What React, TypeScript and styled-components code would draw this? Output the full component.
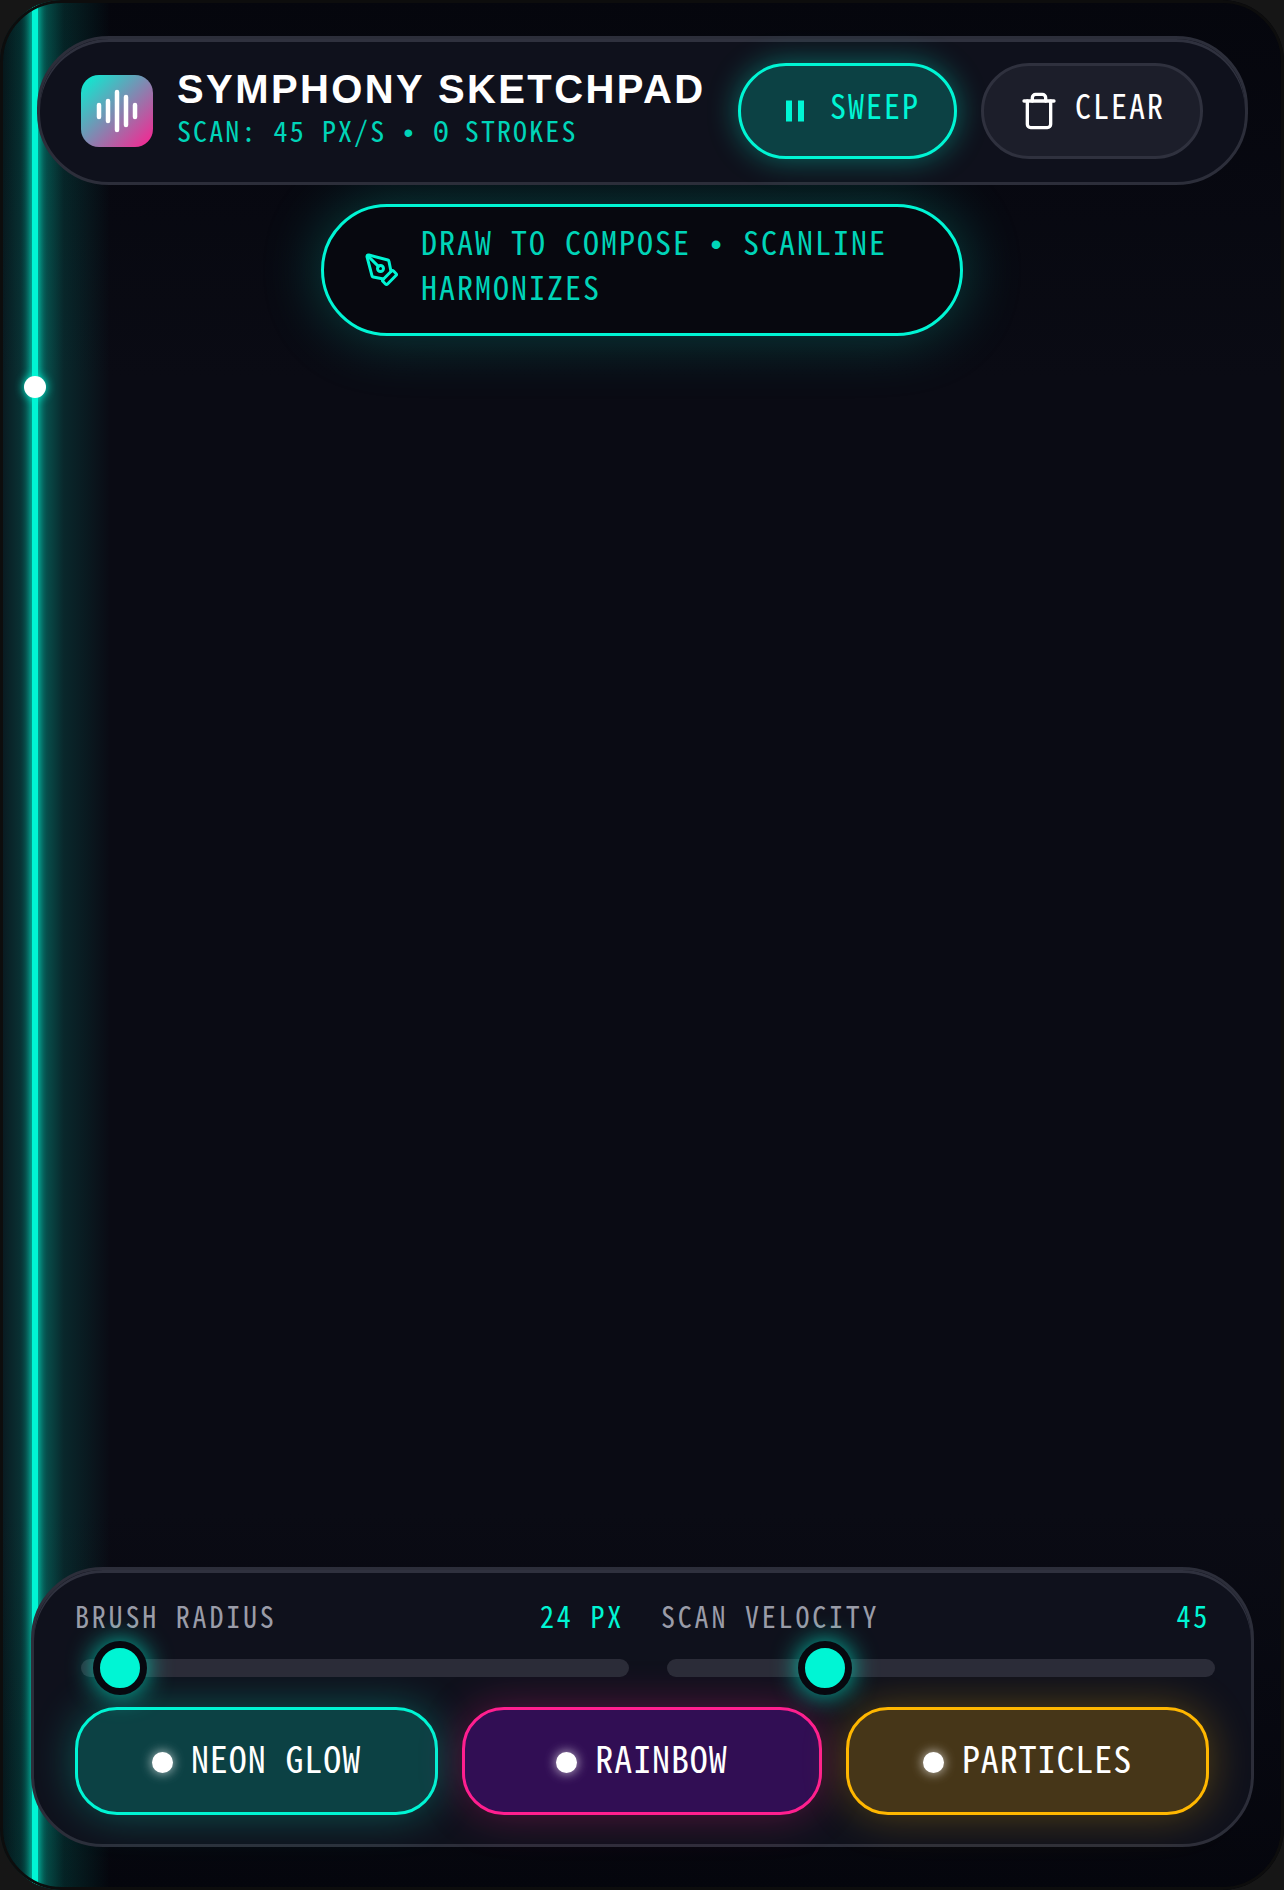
import React from 'react';
import styled, {createGlobalStyle} from 'styled-components';
import {PenTool, Trash} from 'lucide-react';

const TEAL = '#00f5d4';
const MONO = `'Noto Sans Mono CJK SC', 'Noto Sans CJK SC', 'DejaVu Sans Mono', monospace`;

const GlobalStyle = createGlobalStyle`
  html, body {
    margin: 0;
    padding: 0;
    background: #161616;
  }
  * {
    box-sizing: border-box;
  }
`;

const Frame = styled.div`
  position: relative;
  width: 1284px;
  height: 1890px;
  display: flex;
  flex-direction: column;
  overflow: hidden;
  border-radius: 62px;
  background: linear-gradient(180deg, #05060d 0%, #0a0b14 20%, #0a0b14 80%, #05060d 100%);
  /* thin dark rim that sits over the scan glow */
  &::after {
    content: '';
    position: absolute;
    inset: 0;
    border-radius: 62px;
    border: 3px solid #0d0d0d;
    pointer-events: none;
  }
`;

const ScanGlow = styled.div`
  position: absolute;
  top: 0;
  bottom: 0;
  left: 0;
  width: 110px;
  background: linear-gradient(
    90deg,
    rgba(0, 245, 212, 0.05) 0%,
    rgba(0, 245, 212, 0.16) 18%,
    rgba(0, 245, 212, 0.36) 29%,
    rgba(0, 245, 212, 0.36) 35%,
    rgba(0, 245, 212, 0.12) 58%,
    rgba(0, 245, 212, 0) 100%
  );
`;

const ScanLine = styled.div`
  position: absolute;
  top: 0;
  bottom: 0;
  left: 32px;
  width: 6px;
  background: ${TEAL};
  box-shadow: 0 0 8px ${TEAL};
`;

const ScanDot = styled.div`
  position: absolute;
  top: 376px;
  left: 24px;
  width: 22px;
  height: 22px;
  border-radius: 50%;
  background: #fff;
  box-shadow: 0 0 10px ${TEAL};
`;

const Header = styled.header`
  position: relative;
  display: flex;
  align-items: center;
  margin: 36px 36px 0 37px;
  height: 149px;
  padding: 0 42px 0 41px;
  border-radius: 72px;
  border: 3px solid #2c2e3a;
  box-shadow: inset 0 3px 0 #2f313e;
  background: #0f111c;
`;

const Logo = styled.div`
  flex: none;
  width: 72px;
  height: 72px;
  border-radius: 18px;
  display: flex;
  align-items: center;
  justify-content: center;
  background: linear-gradient(135deg, #00f5d4 0%, #ff1f8f 100%);
`;

const TitleBlock = styled.div`
  margin-left: 24px;
  padding-bottom: 8px;
  display: flex;
  flex-direction: column;
`;

const Title = styled.h1`
  margin: 0;
  font: 700 40px/44px 'Liberation Sans', Arial, sans-serif;
  letter-spacing: 2.4px;
  color: #fff;
  white-space: nowrap;
`;

// installed mono is a little shorter than the one on the buttons and labels
const Tall = styled.span`
  display: inline-block;
  transform: scaleY(1.07);
`;

const ButtonLabel = styled(Tall)`
  padding-bottom: 13px;
`;

const Bullet = styled.span`
  display: inline-block;
  width: 0.5em;
  line-height: 1;
  text-align: center;
  font-family: 'Liberation Sans', sans-serif;
`;

// the reference has a slashed zero, this mono does not
const Zero = styled.span`
  display: inline-block;
  line-height: 1;
  font-family: 'DejaVu Sans Mono', monospace;
  letter-spacing: -0.7px;
`;

const Subtitle = styled.div`
  margin-top: 2px;
  font: 400 28px/34px ${MONO};
  letter-spacing: 2.1px;
  color: #00d4b8;
  white-space: nowrap;
`;

const Actions = styled.div`
  margin-left: auto;
  display: flex;
  gap: 24px;
`;

const PillButton = styled.button<{$active?: boolean}>`
  height: 96px;
  display: flex;
  align-items: center;
  justify-content: center;
  border-radius: 48px;
  border: 3px solid ${p => (p.$active ? TEAL : '#2f313e')};
  background: ${p => (p.$active ? '#0c4144' : '#1c1e2a')};
  color: ${p => (p.$active ? TEAL : '#fff')};
  box-shadow: ${p => (p.$active ? '0 0 30px rgba(0, 245, 212, 0.4)' : 'none')};
  font: 400 32px/40px ${MONO};
  letter-spacing: 2px;
`;

const SweepButton = styled(PillButton)`
  width: 219px;
  gap: 23px;
  padding: 0 0 0 8px;
`;

const ClearButton = styled(PillButton)`
  width: 222px;
  gap: 16px;
  padding: 0;
`;

const Hint = styled.div`
  align-self: center;
  margin-top: 19px;
  width: 642px;
  height: 132px;
  display: flex;
  align-items: center;
  gap: 21px;
  padding: 0 40px;
  border-radius: 66px;
  border: 3px solid ${TEAL};
  background: #07080f;
  box-shadow: 0 0 60px rgba(0, 245, 212, 0.25);
  color: #00d4b8;
  font: 400 32px/45px ${MONO};
  letter-spacing: 2px;
`;

const HintIcon = styled(PenTool)`
  flex: none;
  color: ${TEAL};
`;

const HintText = styled.div`
  padding-bottom: 12px;
`;

const Panel = styled.section`
  position: relative;
  margin: auto 30px 43px 31px;
  height: 280px;
  padding: 27px 41px 0;
  border-radius: 72px;
  border: 3px solid #2c2e3a;
  box-shadow: inset 0 3px 0 #2f313e;
  background: #0f111c;
`;

const Sliders = styled.div`
  display: grid;
  grid-template-columns: 549px 549px;
  gap: 37px;
`;

const SliderLabels = styled.div`
  display: flex;
  justify-content: space-between;
  font: 400 28px/36px ${MONO};
  letter-spacing: 2.8px;
`;

const LabelName = styled(Tall)`
  color: #9a9ca8;
`;

const LabelValue = styled(Tall)`
  color: ${TEAL};
`;

const Track = styled.div`
  position: relative;
  margin: 26px -5px 0 6px;
  height: 18px;
  border-radius: 9px;
  background: #2b2c38;
`;

const Thumb = styled.div`
  position: absolute;
  top: 50%;
  width: 54px;
  height: 54px;
  transform: translate(-50%, -50%);
  border-radius: 50%;
  border: 7px solid #07080f;
  background: ${TEAL};
  box-shadow: 0 0 26px rgba(0, 245, 212, 0.8);
`;

const Modes = styled.div`
  margin-top: 30px;
  display: grid;
  grid-template-columns: 363px 360px 363px;
  gap: 24px;
`;

const MODE_COLORS = {
  neon: {border: '#00f5d4', bg: '#0c4144', glow: 'rgba(0, 245, 212, 0.3)'},
  rainbow: {border: '#ff1f8f', bg: '#310e54', glow: 'rgba(255, 31, 143, 0.3)'},
  particles: {border: '#ffb700', bg: '#463618', glow: 'rgba(255, 183, 0, 0.3)'},
};

const ModeButton = styled.button<{$mode: keyof typeof MODE_COLORS}>`
  height: 108px;
  display: flex;
  align-items: center;
  justify-content: center;
  gap: 18px;
  padding: 0;
  border-radius: 42px;
  border: 3px solid ${p => MODE_COLORS[p.$mode].border};
  background: ${p => MODE_COLORS[p.$mode].bg};
  box-shadow: 0 0 44px ${p => MODE_COLORS[p.$mode].glow};
  color: #fff;
  font: 400 36px/44px ${MONO};
  letter-spacing: 0.9px;
`;

const ModeDot = styled.span`
  width: 21px;
  height: 21px;
  margin-top: 2px;
  border-radius: 50%;
  background: #fff;
  box-shadow: 0 0 12px rgba(255, 255, 255, 0.8);
`;

const ModeLabel = styled.span`
  padding-bottom: 9px;
`;

const sliders = [
  {name: 'BRUSH RADIUS', value: '24 PX', thumb: 39},
  {name: 'SCAN VELOCITY', value: '45', thumb: 158},
];

const modes = [
  {id: 'neon', label: 'NEON GLOW'},
  {id: 'rainbow', label: 'RAINBOW'},
  {id: 'particles', label: 'PARTICLES'},
] as const;

export default function App() {
  return (
    <Frame>
      <GlobalStyle />
      <ScanGlow />
      <ScanLine />
      <ScanDot />
      <Header>
        <Logo>
          <svg width="44" height="44" viewBox="0 0 44 44" fill="none" stroke="#fff" strokeWidth="4.5" strokeLinecap="round">
            <path d="M4 16v12M13 12v20M22 3v38M31 8v28M40 16v12" />
          </svg>
        </Logo>
        <TitleBlock>
          <Title>SYMPHONY SKETCHPAD</Title>
          <Subtitle>
            SCAN: 45 PX/S <Bullet>•</Bullet> <Zero>0</Zero> STROKES
          </Subtitle>
        </TitleBlock>
        <Actions>
          <SweepButton $active>
            <svg width="24" height="24" viewBox="0 0 24 24" fill={TEAL}>
              <rect x="3" y="1.5" width="6" height="21" />
              <rect x="15" y="1.5" width="6" height="21" />
            </svg>
            <ButtonLabel>SWEEP</ButtonLabel>
          </SweepButton>
          <ClearButton>
            <Trash size={40} strokeWidth={2} />
            <ButtonLabel>CLEAR</ButtonLabel>
          </ClearButton>
        </Actions>
      </Header>
      <Hint>
        <HintIcon size={36} strokeWidth={2} />
        <HintText>
          DRAW TO COMPOSE <Bullet>•</Bullet> SCANLINE
          <br />
          HARMONIZES
        </HintText>
      </Hint>
      <Panel>
        <Sliders>
          {sliders.map(s => (
            <div key={s.name}>
              <SliderLabels>
                <LabelName>{s.name}</LabelName>
                <LabelValue>{s.value}</LabelValue>
              </SliderLabels>
              <Track>
                <Thumb style={{left: s.thumb}} />
              </Track>
            </div>
          ))}
        </Sliders>
        <Modes>
          {modes.map(m => (
            <ModeButton key={m.id} $mode={m.id}>
              <ModeDot />
              <ModeLabel>{m.label}</ModeLabel>
            </ModeButton>
          ))}
        </Modes>
      </Panel>
    </Frame>
  );
}
